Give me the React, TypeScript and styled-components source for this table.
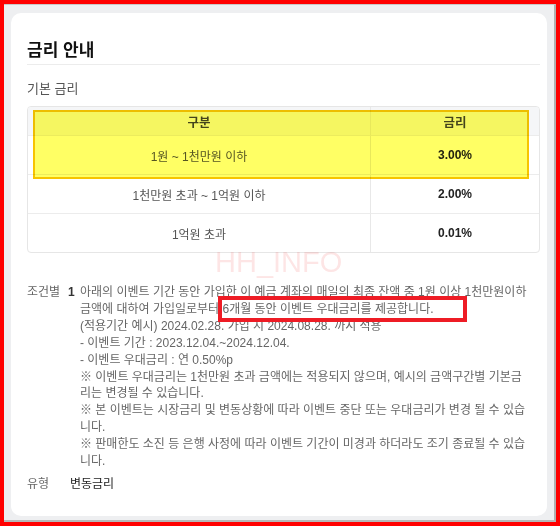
import React from 'react'
import styled, { createGlobalStyle } from 'styled-components'

const GlobalStyle = createGlobalStyle`
  html, body {
    margin: 0;
    padding: 0;
    background: #ff0000;
  }
  body {
    font-family: "Liberation Sans", "Noto Sans CJK KR", sans-serif;
  }
`

const Frame = styled.div`
  box-sizing: border-box;
  margin: 4px;
  height: 518px;
  background: #eeeff1;
  border-top: 1px solid #c8c8c8;
  border-right: 2px solid #b1b1b1;
  border-bottom: 2px solid #b7b7b7;
  padding: 8px 7px 4px 7px;
`

const Card = styled.div`
  position: relative;
  box-sizing: border-box;
  height: 100%;
  background: #fff;
  border-radius: 10px;
  padding: 27px 7px 0 16px;
`

const Title = styled.h2`
  margin: 0;
  font-size: 17px;
  font-weight: 700;
  line-height: 22px;
  color: #111;
  padding-bottom: 2px;
  border-bottom: 1px solid #ececec;
`

const SectionLabel = styled.div`
  margin-top: 15px;
  font-size: 13px;
  line-height: 18px;
  color: #555;
`

const TableWrap = styled.div`
  position: relative;
  margin-top: 8px;
`

const Table = styled.div`
  display: grid;
  grid-template-columns: 343px 1fr;
  border: 1px solid #e6e6e6;
  border-radius: 4px;
  overflow: hidden;
`

const HeadCell = styled.div<{ $last?: boolean }>`
  height: 28px;
  display: flex;
  align-items: center;
  justify-content: center;
  background: #f5f6f8;
  font-size: 12.5px;
  font-weight: 700;
  color: #444;
  border-right: ${p => (p.$last ? 'none' : '1px solid #e8e8e8')};
`

const Cell = styled.div<{ $rate?: boolean }>`
  height: 38px;
  display: flex;
  align-items: center;
  justify-content: center;
  border-top: 1px solid #ececec;
  font-size: 12px;
  font-weight: ${p => (p.$rate ? 700 : 400)};
  color: ${p => (p.$rate ? '#222' : '#555')};
  border-right: ${p => (p.$rate ? 'none' : '1px solid #e8e8e8')};
`

const YellowMark = styled.div`
  position: absolute;
  left: 6px;
  top: 4px;
  width: 496px;
  height: 69px;
  box-sizing: border-box;
  border: 2px solid #f7c400;
  background: rgb(255, 255, 100);
  mix-blend-mode: multiply;
  pointer-events: none;
`

const Watermark = styled.div`
  position: absolute;
  left: 204px;
  top: 235px;
  font-family: "Liberation Sans", sans-serif;
  font-size: 29px;
  line-height: 29px;
  color: rgba(240, 40, 40, 0.12);
  pointer-events: none;
`

const InfoRow = styled.div<{ $gap: number }>`
  display: flex;
  margin-top: ${p => p.$gap}px;
  font-size: 12px;
  line-height: 16.9px;
`

const InfoLabel = styled.div<{ $w: number }>`
  flex: none;
  width: ${p => p.$w}px;
  color: #666;
`

const Num = styled.div`
  flex: none;
  width: 12px;
  font-weight: 700;
  color: #333;
`

const Body = styled.div`
  position: relative;
  flex: 1;
  padding-right: 11px;
  color: #666;
  word-break: break-all;
`

const Line = styled.p`
  margin: 0;
`

const RedBox = styled.div`
  position: absolute;
  left: 138px;
  top: 11.5px;
  width: 249px;
  height: 26px;
  box-sizing: border-box;
  border: 4px solid #ee1c25;
  pointer-events: none;
`

const Value = styled.div`
  color: #222;
`

const rows = [
  { range: '1원 ~ 1천만원 이하', rate: '3.00%' },
  { range: '1천만원 초과 ~ 1억원 이하', rate: '2.00%' },
  { range: '1억원 초과', rate: '0.01%' },
]

const notes = [
  '아래의 이벤트 기간 동안 가입한 이 예금 계좌의 매일의 최종 잔액 중 1원 이상 1천만원이하 금액에 대하여 가입일로부터 6개월 동안 이벤트 우대금리를 제공합니다.',
  '(적용기간 예시) 2024.02.28. 가입 시 2024.08.28. 까지 적용',
  '- 이벤트 기간 : 2023.12.04.~2024.12.04.',
  '- 이벤트 우대금리 : 연 0.50%p',
  '※ 이벤트 우대금리는 1천만원 초과 금액에는 적용되지 않으며, 예시의 금액구간별 기본금리는 변경될 수 있습니다.',
  '※ 본 이벤트는 시장금리 및 변동상황에 따라 이벤트 중단 또는 우대금리가 변경 될 수 있습니다.',
  '※ 판매한도 소진 등 은행 사정에 따라 이벤트 기간이 미경과 하더라도 조기 종료될 수 있습니다.',
]

export default function App() {
  return (
    <>
      <GlobalStyle />
      <Frame>
        <Card>
          <Title>금리 안내</Title>
          <SectionLabel>기본 금리</SectionLabel>
          <TableWrap>
            <Table>
              <HeadCell>구분</HeadCell>
              <HeadCell $last>금리</HeadCell>
              {rows.map(r => (
                <React.Fragment key={r.range}>
                  <Cell>{r.range}</Cell>
                  <Cell $rate>{r.rate}</Cell>
                </React.Fragment>
              ))}
            </Table>
            <YellowMark />
          </TableWrap>
          <Watermark>HH_INFO</Watermark>
          <InfoRow $gap={31}>
            <InfoLabel $w={41}>조건별</InfoLabel>
            <Num>1</Num>
            <Body>
              {notes.map(n => (
                <Line key={n}>{n}</Line>
              ))}
              <RedBox />
            </Body>
          </InfoRow>
          <InfoRow $gap={6}>
            <InfoLabel $w={43}>유형</InfoLabel>
            <Value>변동금리</Value>
          </InfoRow>
        </Card>
      </Frame>
    </>
  )
}
